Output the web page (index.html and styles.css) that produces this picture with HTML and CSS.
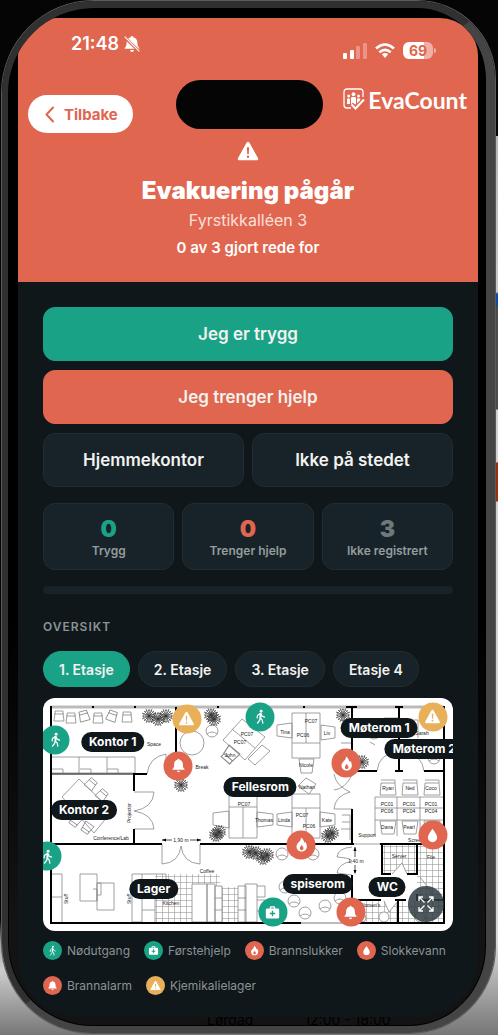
FILE: index.html
```html
<!DOCTYPE html>
<html lang="no">
<head>
  <meta charset="UTF-8">
  <meta name="viewport" content="width=device-width, initial-scale=1.0">
  <title>EvaCount</title>
  <link rel="stylesheet" href="styles.css">
</head>
<body>
  <!-- Shared icons -->
  <svg class="sprite" aria-hidden="true">
    <symbol id="walk" viewBox="0 0 24 24">
      <circle cx="13" cy="4" r="2.2" fill="currentColor"/>
      <path d="M11.5 7.5 L7.5 10.5 L7 14 M12.5 7.5 L14.5 11.5 L18 13 M12 8 L11.5 14 L14.5 17 L15.5 22 M11.5 14 L10.5 18 L7.5 22" fill="none" stroke="currentColor" stroke-width="1.9" stroke-linecap="round" stroke-linejoin="round"/>
      <path d="M11 7 L13.6 7.4 L13.4 14 L10.8 14 Z" fill="currentColor"/>
    </symbol>
    <symbol id="warn" viewBox="0 0 24 24">
      <path fill="currentColor" fill-rule="evenodd" d="M12 2 Q13 2 13.6 3 L23 20 Q23.6 22 21.8 22 H2.2 Q0.4 22 1 20 L10.4 3 Q11 2 12 2 Z M10.8 8 L11.2 15.5 H12.8 L13.2 8 Z M12 17 A1.3 1.3 0 1 0 12 19.6 A1.3 1.3 0 1 0 12 17 Z"/>
    </symbol>
    <symbol id="bell" viewBox="0 0 24 24">
      <path fill="currentColor" d="M12 2 C12.9 2 13.5 2.6 13.5 3.4 C16.8 4.1 18.5 6.8 18.5 10 C18.5 14.5 19.5 15.8 21 17.2 V18.5 H3 V17.2 C4.5 15.8 5.5 14.5 5.5 10 C5.5 6.8 7.2 4.1 10.5 3.4 C10.5 2.6 11.1 2 12 2 Z M9.5 20 H14.5 C14.3 21.4 13.3 22.2 12 22.2 C10.7 22.2 9.7 21.4 9.5 20 Z"/>
    </symbol>
    <symbol id="flame" viewBox="0 0 24 24">
      <path fill="currentColor" fill-rule="evenodd" d="M11 1.5 C16 4.5 15.5 7.5 16.2 9.5 C16.9 9 17.2 8.2 17.2 7.4 C19 9.4 20 12 20 14.5 C20 19.5 16.5 22.5 12 22.5 C7.5 22.5 4.5 19.3 4.5 15 C4.5 9 12 8 11 1.5 Z M12.3 12 C12.3 14.5 9.5 15 9.5 17.7 C9.5 19.4 10.6 20.5 12.2 20.5 C13.9 20.5 15 19.3 15 17.7 C15 15.5 13 14.5 12.3 12 Z"/>
    </symbol>
    <symbol id="drop" viewBox="0 0 24 24">
      <path fill="currentColor" d="M12 2 C14.5 6 19 10.5 19 15 A7 7 0 0 1 5 15 C5 10.5 9.5 6 12 2 Z"/>
    </symbol>
    <symbol id="kit" viewBox="0 0 24 24">
      <path fill="currentColor" fill-rule="evenodd" d="M8 6 V4 Q8 2.5 9.5 2.5 H14.5 Q16 2.5 16 4 V6 H20 Q22 6 22 8 V19 Q22 21 20 21 H4 Q2 21 2 19 V8 Q2 6 4 6 Z M10 6 H14 V4.5 H10 Z M11 9.5 V12.5 H8 V14.5 H11 V17.5 H13 V14.5 H16 V12.5 H13 V9.5 Z"/>
    </symbol>
  </svg>

  <div class="phone">
    <main class="screen">
      <header class="alert-header">
        <div class="status-bar">
          <div class="clock">
            <span>21:48</span>
            <svg width="16" height="18" viewBox="0 0 24 26" aria-hidden="true">
              <path fill="#fff" d="M12 1 C13 1 14 2 14 3 C18 4 20 7 20 10.500 C20 15 21 17 23 19 V20 H1 V19 C3 17 4 15 4 10.500 C4 7 6 4 10 3 C10 2 11 1 12 1 Z M9 22 H15 C14.500 24 13.500 25 12 25 C10.500 25 9.500 24 9 22 Z"/>
              <path d="M1 3 L23 24" stroke="#e06650" stroke-width="4.500"/>
              <path d="M1 2 L23 24" stroke="#fff" stroke-width="1.800"/>
            </svg>
          </div>
          <div class="indicators">
            <svg width="24" height="16" viewBox="0 0 24 16" fill="#fff" aria-hidden="true">
              <rect x="0" y="10" width="4" height="6" rx="1"/>
              <rect x="7" y="7" width="4" height="9" rx="1"/>
              <rect x="13" y="3" width="4" height="13" rx="1" opacity=".3"/>
              <rect x="20" y="0" width="4" height="16" rx="1" opacity=".3"/>
            </svg>
            <svg width="20" height="16" viewBox="0 0 20 16" fill="none" stroke="#fff" stroke-width="2.6" aria-hidden="true">
              <path d="M1 5.5 Q10 -2.5 19 5.5"/>
              <path d="M4.3 9.3 Q10 4.3 15.7 9.3"/>
              <path d="M6.8 11.3 Q10 8.8 13.2 11.3 L10 15 Z" fill="#fff" stroke="none"/>
            </svg>
            <div class="battery">69</div>
          </div>
        </div>

        <div class="island"></div>

        <nav class="top-nav">
          <button class="back-button" type="button">
            <svg width="9" height="17" viewBox="0 0 9 17" fill="none" stroke="currentColor" stroke-width="2" stroke-linecap="round" stroke-linejoin="round" aria-hidden="true"><path d="M8 1.5 L1.5 8.5 L8 15.5"/></svg>
            Tilbake
          </button>
          <a class="brand" href="#">
            <svg width="22" height="22" viewBox="0 0 22 22" fill="none" aria-hidden="true">
              <path d="M20 9 V4 Q20 1 17 1 H4 Q1 1 1 4 V17 Q1 20 4 20 H8" stroke="#fff" stroke-width="1.3"/>
              <g fill="#fff">
                <circle cx="10.5" cy="6.2" r="1.9"/>
                <circle cx="5.7" cy="8" r="1.5"/>
                <circle cx="15.5" cy="8" r="1.5"/>
                <path d="M8 9.5 Q10.5 7.8 13 9.5 V16 L11.5 17 H8 Z"/>
                <path d="M4 11 Q5.5 9.5 7 11 V16 H4 Z"/>
                <path d="M14 11 Q15.5 9.5 17.3 11 V13 L14 15.5 Z"/>
              </g>
              <path d="M8.5 16 L12.5 20 L21 11" stroke="#e06650" stroke-width="4"/>
              <path d="M8.5 16.5 L12.5 20.5 L21 11.5" stroke="#fff" stroke-width="2"/>
            </svg>
            <span>EvaCount</span>
          </a>
        </nav>

        <div class="alert-text">
          <svg class="alert-icon" width="22" height="22" aria-hidden="true"><use href="#warn"/></svg>
          <h1>Evakuering pågår</h1>
          <p class="place">Fyrstikkalléen 3</p>
          <p class="count">0 av 3 gjort rede for</p>
        </div>
      </header>

      <section class="content">
        <div class="actions">
          <button class="action safe" type="button">Jeg er trygg</button>
          <button class="action help" type="button">Jeg trenger hjelp</button>
          <button class="action" type="button">Hjemmekontor</button>
          <button class="action" type="button">Ikke på stedet</button>
        </div>

        <div class="stats">
          <div class="stat"><strong class="green">0</strong><span>Trygg</span></div>
          <div class="stat"><strong class="red">0</strong><span>Trenger hjelp</span></div>
          <div class="stat"><strong>3</strong><span>Ikke registrert</span></div>
        </div>

        <div class="progress"></div>

        <h2>OVERSIKT</h2>
        <div class="floors">
          <button class="floor active" type="button">1. Etasje</button>
          <button class="floor" type="button">2. Etasje</button>
          <button class="floor" type="button">3. Etasje</button>
          <button class="floor" type="button">Etasje 4</button>
        </div>

        <div class="map">
          <svg class="plan" viewBox="43 698 410 233" aria-hidden="true">
            <defs>
              <pattern id="tiles" width="6" height="6" patternUnits="userSpaceOnUse">
                <path d="M0 0 H6 M0 0 V6" stroke="#888" stroke-width="1"/>
              </pattern>
              <g id="chair"><path d="M-4 -3 L-5 5 H5 L4 -3 M-4 -5 H4 V-2 H-4 Z"/></g>
              <g id="seat"><circle r="6"/><path d="M-5 3 Q0 -1 5 3"/></g>
              <g id="plant" stroke="#333" stroke-width="0.7">
                <path d="M-7 0 H7 M0 -7 V7 M-5 -5 L5 5 M-5 5 L5 -5 M-7 -3 L7 3 M-3 7 L3 -7 M-7 3 L7 -3 M-3 -7 L3 7"/>
                <circle r="3" stroke-dasharray="1 1"/><circle r="5.5" stroke-dasharray="2 1"/>
              </g>
            </defs>

            <!-- Tiled floors -->
            <g fill="url(#tiles)">
              <path d="M155 874 H220 V887 H240 V922 H155 Z"/>
              <path d="M383 845 H443 V922 H355 V901 H417 V874 H383 Z"/>
            </g>

            <!-- Furniture -->
            <g fill="none" stroke="#888" stroke-width="0.8">
              <use href="#chair" x="59" y="716"/><use href="#chair" x="71" y="718"/>
              <use href="#chair" transform="translate(84 716) rotate(-15)"/><use href="#chair" x="98" y="718"/>
              <use href="#chair" transform="translate(112 716) rotate(20)"/><use href="#chair" x="127" y="717"/>
              <path d="M52 757 H135 V773 H52 M79 757 V773 M107 757 V773 M52 769 H63 V773 M80 769 H91 V773 M107 769 H118 V773"/>
              <path d="M62 797 L79 779 L112 811 L94 833 Z"/>
              <use href="#chair" transform="translate(91 784) rotate(40)"/><use href="#chair" transform="translate(102 795) rotate(40)"/>
              <use href="#chair" transform="translate(75 821) rotate(215)"/><use href="#chair" transform="translate(87 828) rotate(215)"/>
              <path d="M147 774 Q149 757 166 754 V774 M134 792 H154 Q153 808 134 811 Q153 814 154 829 H134"/>
              <path d="M162 844 V864 Q179 863 181 846 Q183 863 200 864 V844"/>
              <circle cx="192" cy="743" r="12"/><use href="#seat" x="212" y="731"/><use href="#seat" x="190" y="723"/>
              <path d="M223 740 L242 719 L265 737 L245 760 Z M232 729 L255 748 M248 759 L262 745 L270 751 L255 765 Z"/>
              <use href="#chair" transform="translate(230 755) rotate(220) scale(1.4)"/>
              <path d="M292 713 H320 V758 H292 Z M306 713 V743 M292 743 H320 M292 794 H320 V838 H292 Z M292 808 H320 M306 808 V838"/>
              <path d="M229 796 H257 V838 H229 Z M229 807 H257 M243 807 V838 M213 813 L229 811 V828 L213 825 Z M257 812 L273 814 V825 L257 827 Z M277 814 L292 812 V827 L277 825 Z M320 812 L335 814 V825 L320 827 Z"/>
              <path d="M277 725 L292 723 V738 L277 736 Z M321 725 L335 727 V738 L321 740 Z M299 759 H314 L312 773 H301 Z M298 786 L306 778 L316 784 L309 794 Z"/>
              <path d="M341 720 H352 M341 743 H352 M384 718 H399 M400 720 H418 V738 M375 745 L370 742"/>
              <use href="#seat" x="434" y="758"/><use href="#seat" x="374" y="733"/>
              <path d="M377 771 Q379 754 396 752 M424 771 Q422 755 405 752 M352 775 Q345 789 334 790 M334 774 Q336 786 350 792 Q335 796 334 809 H352"/>
              <path d="M375 797 H444 M375 808 H444 M375 820 H444 M375 797 V836 M397 797 V836 M420 797 V836"/>
              <path d="M381 783 H395 L396 795 H380 Z M403 783 H417 L418 795 H402 Z M425 783 H439 L440 795 H424 Z M381 780 H395 V783 M403 780 H417 V783 M425 780 H439 V783"/>
              <path d="M380 821 H396 L394 834 H382 Z M402 821 H418 L416 834 H404 Z M424 821 H440 L438 834 H426 Z"/>
              <path d="M52 874 H62 V922 M52 897 H62 M80 874 H97 V901 H80 Z M97 883 H114 V910 H97 Z M93 889 H97 V901 M97 883 H101 V895 H97"/>
              <path d="M132 874 H142 V922 H132 Z M142 874 H166 V884 M142 910 H155 V922 M149 884 H155 V910"/>
              <path fill="#fff" d="M192 884 H207 V922 H192 Z M207 884 H215 V922 H207 Z M215 886 H222 V922 H215 Z M238 886 H246 V922 H238 Z M215 898 H222 M215 910 H222 M238 898 H246 M238 910 H246 M245 884 H257 V922 H245 Z M257 886 H265 V897 H257 M257 900 H265 V911 H257"/>
              <use href="#seat" x="282" y="854"/><use href="#seat" x="313" y="854"/><use href="#seat" x="294" y="901"/>
              <use href="#seat" x="285" y="887"/><use href="#seat" x="305" y="913"/><use href="#seat" x="325" y="906"/><use href="#seat" x="340" y="898"/>
              <path d="M352 847 Q338 848 337 857 Q351 858 352 861 Q338 864 337 873 L352 875 M354 844 H380 M417 844 H444"/>
              <path fill="#fff" d="M392 874 L402 863 L407 874 M420 877 Q427 885 434 897 M384 901 L389 912 L398 901"/>
              <circle cx="384" cy="917" r="5" fill="#fff"/><circle cx="420" cy="917" r="5" fill="#fff"/><circle cx="362" cy="918" r="4" fill="#fff"/>
              <path d="M342 815 H350 V840 M342 822 H350 M341 829 H351"/>
            </g>
            <g fill="none">
              <use href="#plant" x="149" y="716"/><use href="#plant" x="158" y="719"/><use href="#plant" x="166" y="716"/>
              <use href="#plant" x="211" y="715"/><use href="#plant" x="214" y="719"/><use href="#plant" x="181" y="785"/>
              <use href="#plant" x="343" y="715"/><use href="#plant" x="362" y="762"/>
              <use href="#plant" x="216" y="835"/><use href="#plant" x="219" y="832"/><use href="#plant" x="249" y="852"/>
              <use href="#plant" x="256" y="853"/><use href="#plant" x="263" y="858"/><use href="#plant" x="267" y="855"/>
              <use href="#plant" x="328" y="836"/><use href="#plant" x="332" y="833"/>
            </g>

            <!-- Walls -->
            <path d="M51 707 H444" stroke="#bbb" stroke-width="3"/>
            <path d="M301 923 H345" stroke="#bbb" stroke-width="2"/>
            <g fill="none" stroke="#000" stroke-width="2">
              <path d="M51 706 V923 H301 M345 923 H444 V706 M134 791 V774 H147 M176 707 V774 H167 M134 829 V844 M51 844 H162 M200 844 H354 M352 707 V771 H377 M346 707 H357 M395 707 H403 M399 707 V771 M395 771 H403 M424 771 H444 M352 809 V844 M352 875 V900 H381 M380 844 H444 M382 844 V874 H391 M407 874 H417 V844 M395 900 H406 M398 900 V923 M417 894 V900 H444"/>
            </g>
            <path d="M51 774 H134" stroke="#000"/>
            <path d="M92 706 h2 v2 h-2 Z M134 706 h2 v2 h-2 Z M217 706 h2 v2 h-2 Z M303 706 h2 v2 h-2 Z"/>
            <path d="M162 840 H172 M190 840 H201 M355 847 V857 M355 865 V873" stroke="#222" stroke-width="0.8"/>
            <path d="M162 840 l4 -1.5 v3 Z M201 840 l-4 -1.5 v3 Z M355 847 l-1.5 4 h3 Z M355 874 l-1.5 -4 h3 Z"/>

            <!-- Names and room notes -->
            <g class="plan-text">
              <text x="154" y="746">Space</text><text x="202" y="769">Break</text>
              <text x="111" y="840">Conference/Lab</text><text x="181" y="842">1,90 m</text>
              <text x="207" y="873">Coffee</text><text x="171" y="905">Kitchen</text>
              <text transform="translate(68 899) rotate(-90)">Stuff</text>
              <text transform="translate(131 899) rotate(-90)">Stuff</text>
              <text transform="translate(131 813) rotate(-90)">Projector</text>
              <text x="230" y="757">John</text><text x="285" y="734">Tina</text><text x="327" y="735">Liv</text>
              <text x="306" y="767">Nicole</text><text x="307" y="789">Nathan</text>
              <text x="264" y="822">Thomas</text><text x="284" y="822">Linda</text><text x="327" y="822">Kate</text>
              <text x="247" y="736">PC07</text><text x="240" y="744">PC07</text><text x="311" y="723">PC07</text><text x="303" y="737">PC06</text>
              <text x="244" y="806">PC07</text><text x="302" y="817">PC07</text><text x="309" y="828">PC06</text>
              <text x="388" y="790">Ryan</text><text x="410" y="790">Ned</text><text x="431" y="790">Coco</text>
              <text x="387" y="806">PC01</text><text x="409" y="806">PC01</text><text x="431" y="806">PC01</text>
              <text x="387" y="813">PC06</text><text x="409" y="813">PC04</text><text x="431" y="813">PC04</text>
              <text x="387" y="829">Dana</text><text x="409" y="829">Pearl</text><text x="430" y="829">Geir</text>
              <text x="367" y="837">Support</text><text x="356" y="863">1,40 m</text>
              <text x="399" y="858">Server</text><text x="431" y="859">File</text><text x="370" y="907">Women's</text>
              <text x="422" y="735">Sarah</text><text x="416" y="842">Screen</text>
            </g>
          </svg>

          <span class="room kontor-1">Kontor 1</span>
          <span class="room kontor-2">Kontor 2</span>
          <span class="room fellesrom">Fellesrom</span>
          <span class="room moterom-1">Møterom 1</span>
          <span class="room moterom-2">Møterom 2</span>
          <span class="room lager">Lager</span>
          <span class="room spiserom">spiserom</span>
          <span class="room wc">WC</span>

          <button class="pin green-bg exit-1" type="button" aria-label="Nødutgang"><svg><use href="#walk"/></svg></button>
          <button class="pin green-bg exit-2" type="button" aria-label="Nødutgang"><svg><use href="#walk"/></svg></button>
          <button class="pin green-bg exit-3" type="button" aria-label="Nødutgang"><svg><use href="#walk"/></svg></button>
          <button class="pin yellow-bg chem-1" type="button" aria-label="Kjemikalielager"><svg><use href="#warn"/></svg></button>
          <button class="pin yellow-bg chem-2" type="button" aria-label="Kjemikalielager"><svg><use href="#warn"/></svg></button>
          <button class="pin red-bg alarm-1" type="button" aria-label="Brannalarm"><svg><use href="#bell"/></svg></button>
          <button class="pin red-bg alarm-2" type="button" aria-label="Brannalarm"><svg><use href="#bell"/></svg></button>
          <button class="pin red-bg fire-1" type="button" aria-label="Brannslukker"><svg><use href="#flame"/></svg></button>
          <button class="pin red-bg fire-2" type="button" aria-label="Brannslukker"><svg><use href="#flame"/></svg></button>
          <button class="pin red-bg water" type="button" aria-label="Slokkevann"><svg><use href="#drop"/></svg></button>
          <button class="pin green-bg first-aid" type="button" aria-label="Førstehjelp"><svg><use href="#kit"/></svg></button>

          <button class="expand" type="button" aria-label="Fullskjerm">
            <svg width="16" height="16" viewBox="0 0 16 16" fill="none" stroke="currentColor" stroke-width="1.3"><path d="M1 5 V1 H5 M1 1 L6.5 6.5 M11 1 H15 V5 M15 1 L9.5 6.5 M15 11 V15 H11 M15 15 L9.5 9.5 M5 15 H1 V11 M1 15 L6.5 9.5"/></svg>
          </button>
        </div>

        <ul class="legend">
          <li><i class="green-bg"><svg><use href="#walk"/></svg></i>Nødutgang</li>
          <li><i class="green-bg"><svg><use href="#kit"/></svg></i>Førstehjelp</li>
          <li><i class="red-bg"><svg><use href="#flame"/></svg></i>Brannslukker</li>
          <li><i class="red-bg"><svg><use href="#drop"/></svg></i>Slokkevann</li>
          <li><i class="red-bg"><svg><use href="#bell"/></svg></i>Brannalarm</li>
          <li><i class="yellow-bg"><svg><use href="#warn"/></svg></i>Kjemikalielager</li>
        </ul>
      </section>
    </main>
    <div class="chin"><span>Lørdag</span><span>12:00 - 18:00</span></div>
  </div>
</body>
</html>
```
FILE: styles.css
```css
* {
  box-sizing: border-box;
}

/* Dark page with a lighter strip on the right and light bottom corners */
body {
  margin: 0;
  padding: 1px 3px 2px 2px;
  min-height: 100vh;
  display: flex;
  font-family: Inter, "Liberation Sans", sans-serif;
  color: #fff;
  background:
    linear-gradient(to bottom, #050505 136px, #b5b5b5 136px, #c9c9c9 292px, #0b4bb0 294px, #0b4bb0 305px, #4a4a4a 307px, #4a4a4a 409px, #d0d0d0 410px, #d0d0d0 462px, #9a2f10 463px, #9a2f10 501px, #cfcfcf 502px, #d8d8d8 940px, #777 100%) right / 50% 100% no-repeat,
    linear-gradient(to bottom, #050505 920px, #aaa 945px, #ccc 970px, #777 100%) left / 50% 100% no-repeat;
}

button {
  font-family: inherit;
  border: none;
  margin: 0;
  padding: 0;
  cursor: pointer;
}

.sprite {
  position: absolute;
  width: 0;
  height: 0;
}

/* Phone frame */
.phone {
  flex: 1;
  display: flex;
  flex-direction: column;
  border: solid #303030;
  border-width: 7px 9px 7px 6px;
  border-right-color: #444;
  border-bottom-color: #444;
  border-radius: 92px 78px 86px 90px;
  padding: 10px 8px 0 10px;
  background: linear-gradient(to bottom, #000 60%, #131313 90%);
  box-shadow: inset 0 0 0 1px #000, 0 0 0 1px #5a5a5a;
  overflow: hidden;
}
.screen {
  flex: 1;
  overflow: hidden;
  background: #0f171b;
  border-radius: 38px 38px 60px 60px;
}
.chin {
  height: 9px;
  padding-left: 189px;
  display: flex;
  align-items: flex-end;
  gap: 51px;
  overflow: hidden;
  font-size: 14px;
  line-height: 12px;
  color: #000;
}

/* Red header */
.alert-header {
  position: relative;
  height: 264px;
  background: #e06650;
}
.status-bar {
  display: flex;
  justify-content: space-between;
  align-items: flex-start;
  padding: 16px 45px 0 53px;
  height: 70px;
}
.clock {
  display: flex;
  align-items: center;
  gap: 5px;
  font-size: 18px;
  line-height: 20px;
  font-weight: 600;
}
.indicators {
  display: flex;
  align-items: center;
  gap: 8px;
  margin-top: 8px;
}
.battery {
  position: relative;
  width: 30px;
  height: 17px;
  border-radius: 6px;
  background: linear-gradient(to right, #fff 70%, #f0b0a4 70%);
  color: #e06650;
  font-size: 14px;
  line-height: 17px;
  font-weight: 700;
  text-align: center;
}
.battery::after {
  content: "";
  position: absolute;
  right: -3px;
  top: 6px;
  width: 2px;
  height: 5px;
  border-radius: 0 2px 2px 0;
  background: #f0b0a4;
}
.island {
  position: absolute;
  top: 62px;
  left: 50%;
  width: 147px;
  height: 49px;
  margin-left: -72px;
  border-radius: 25px;
  background: #050505;
}
.top-nav {
  display: flex;
  justify-content: space-between;
  align-items: flex-start;
  padding: 0 11px 0 10px;
}
.back-button {
  display: flex;
  align-items: center;
  gap: 10px;
  height: 38px;
  margin-top: 7px;
  padding: 0 15px 0 17px;
  border-radius: 19px;
  background: #fff;
  color: #e06650;
  font-size: 15px;
  font-weight: 700;
}
.brand {
  display: flex;
  gap: 3px;
  color: #fff;
  text-decoration: none;
}
.brand span {
  font-family: Lato, sans-serif;
  font-size: 23px;
  line-height: 24px;
  font-weight: 700;
}
.alert-text {
  display: flex;
  flex-direction: column;
  align-items: center;
  padding-top: 7px;
  text-align: center;
}
.alert-icon {
  display: block;
}
.alert-text h1 {
  margin: 14px 0 0;
  font-size: 24px;
  line-height: 30px;
  font-weight: 900;
}
.place {
  margin: 4px 0 0;
  font-size: 16px;
  line-height: 20px;
  color: #fbe0da;
}
.count {
  margin: 8px 0 0;
  font-size: 15px;
  line-height: 20px;
  font-weight: 600;
}

/* Dark content */
.content {
  padding: 25px 25px 0;
}
.actions {
  display: grid;
  grid-template-columns: 1fr 1fr;
  gap: 9px 8px;
}
.action {
  height: 54px;
  border: 1px solid #222d33;
  border-radius: 12px;
  background: #182329;
  color: #f2f2ef;
  font-size: 17px;
  font-weight: 600;
}
.action.safe {
  grid-column: 1 / 3;
  background: #1aa287;
  border-color: #1aa287;
}
.action.help {
  grid-column: 1 / 3;
  background: #e06650;
  border-color: #e06650;
}
.stats {
  display: grid;
  grid-template-columns: 1fr 1fr 1fr;
  gap: 8px;
  margin-top: 16px;
}
.stat {
  display: flex;
  flex-direction: column;
  align-items: center;
  height: 67px;
  padding-top: 11px;
  border: 1px solid #222d33;
  border-radius: 12px;
  background: #182329;
}
.stat strong {
  font-size: 23px;
  line-height: 28px;
  font-weight: 900;
  color: #6f797c;
}
.stat span {
  font-size: 12px;
  line-height: 16px;
  font-weight: 600;
  color: #949c9d;
}
.stat .green {
  color: #1aa287;
}
.stat .red {
  color: #e06650;
}
.progress {
  height: 8px;
  margin-top: 16px;
  border-radius: 4px;
  background: #182329;
}
.content h2 {
  margin: 25px 0 0;
  font-size: 12px;
  line-height: 16px;
  font-weight: 600;
  letter-spacing: 1px;
  color: #8b9395;
}
.floors {
  display: flex;
  gap: 8px;
  margin-top: 16px;
}
.floor {
  height: 36px;
  padding: 0 15px;
  border: 1px solid #222d33;
  border-radius: 18px;
  background: #182329;
  color: #f2f2ef;
  font-size: 14px;
  font-weight: 600;
}
.floor.active {
  background: #1aa287;
  border-color: #1aa287;
}

/* Floor plan */
.map {
  position: relative;
  margin-top: 11px;
  border-radius: 12px;
  background: #fff;
  overflow: hidden;
}
.plan {
  display: block;
  width: 100%;
}
.plan-text {
  font-family: "Liberation Sans", Arial, sans-serif;
  font-size: 5px;
  text-anchor: middle;
  fill: #222;
}
.room,
.pin {
  position: absolute;
  transform: translate(-50%, -50%);
}
.room {
  padding: 0 8px;
  border-radius: 10px;
  background: #0f171b;
  font-size: 12px;
  line-height: 20px;
  font-weight: 700;
  white-space: nowrap;
}
.kontor-1 { left: 17%; top: 19%; }
.kontor-2 { left: 10%; top: 48%; }
.fellesrom { left: 53%; top: 38%; }
.moterom-1 { left: 82%; top: 13%; }
.moterom-2 { left: 93%; top: 22%; }
.lager { left: 27%; top: 82%; }
.spiserom { left: 67%; top: 80%; }
.wc { left: 84%; top: 81%; }

.pin {
  display: flex;
  align-items: center;
  justify-content: center;
  width: 29px;
  height: 29px;
  border-radius: 50%;
  color: #fff;
}
.pin svg {
  width: 16px;
  height: 16px;
}
.exit-1 { left: 3%; top: 18%; }
.exit-2 { left: 53%; top: 8%; }
.exit-3 { left: 1%; top: 68%; }
.chem-1 { left: 35%; top: 9%; }
.chem-2 { left: 95%; top: 8%; }
.alarm-1 { left: 33%; top: 29%; }
.alarm-2 { left: 75%; top: 92%; }
.fire-1 { left: 74%; top: 28%; }
.fire-2 { left: 63%; top: 63%; }
.water { left: 95%; top: 59%; }
.first-aid { left: 56%; top: 92%; }

.green-bg { background: #1aa287; }
.red-bg { background: #e06650; }
.yellow-bg { background: #e9b05a; }

.expand {
  position: absolute;
  right: 9px;
  bottom: 9px;
  display: flex;
  align-items: center;
  justify-content: center;
  width: 36px;
  height: 36px;
  border-radius: 50%;
  background: rgba(47, 60, 65, 0.85);
  color: #fff;
}

.legend {
  display: flex;
  flex-wrap: wrap;
  gap: 16px 14px;
  margin: 10px 0 0;
  padding: 0;
  list-style: none;
  font-size: 12px;
  line-height: 19px;
  color: #8b9395;
}
.legend li {
  display: flex;
  align-items: center;
  gap: 5px;
}
.legend i {
  display: flex;
  align-items: center;
  justify-content: center;
  width: 19px;
  height: 19px;
  border-radius: 50%;
  color: #fff;
}
.legend svg {
  width: 11px;
  height: 11px;
}
```
